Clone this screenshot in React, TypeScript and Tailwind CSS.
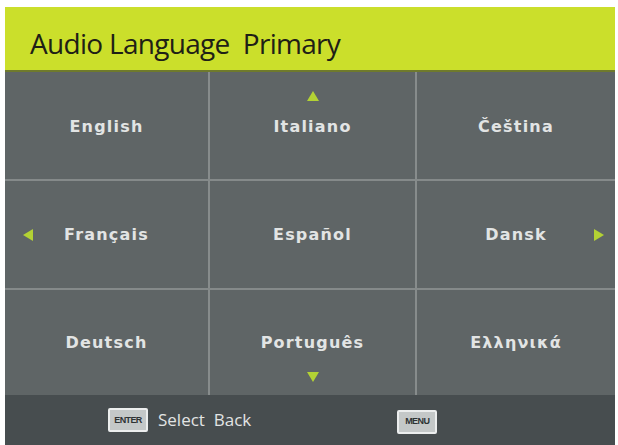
import React from "react";

type Arrow = "up" | "down" | "left" | "right" | null;

const CELLS: { label: string; arrow: Arrow }[] = [
  { label: "English", arrow: null },
  { label: "Italiano", arrow: "up" },
  { label: "Čeština", arrow: null },
  { label: "Français", arrow: "left" },
  { label: "Español", arrow: null },
  { label: "Dansk", arrow: "right" },
  { label: "Deutsch", arrow: null },
  { label: "Português", arrow: "down" },
  { label: "Ελληνικά", arrow: null },
];

function Tri({ dir }: { dir: Exclude<Arrow, null> }) {
  const pts: Record<string, string> = {
    up: "6,0 12,10 0,10",
    down: "0,0 12,0 6,10",
    left: "10,0 10,12 0,6",
    right: "0,0 10,6 0,12",
  };
  return (
    <svg width="12" height="12" viewBox="0 0 12 12">
      <polygon points={pts[dir]} fill="#b3d234" />
    </svg>
  );
}

function Key({ label }: { label: string }) {
  return (
    <span className="inline-flex h-[24px] w-[40px] items-center justify-center rounded-[2px] border-2 border-[#eceeee] bg-[#c4c8c8] text-[9px] font-bold leading-none tracking-[-0.6px] text-[#2e3334] [font-family:'Liberation_Sans_Narrow','Liberation_Sans',sans-serif]">
      {label}
    </span>
  );
}

export default function App() {
  return (
    <div className="h-[445px] w-[618px] overflow-hidden bg-white pl-[5px] pr-[3px] pt-[7px]">
      <div className="flex h-full flex-col">
        {/* Title bar */}
        <div className="flex h-[65px] shrink-0 items-center border-b-2 border-[#6f7a2c] bg-[#cbdf2b] pl-[25px] pt-[8px]">
          <h1 className="text-[28px] leading-none tracking-[-0.7px] text-[#1e2016] [font-family:'Open_Sans',sans-serif]">
            Audio Language&nbsp; Primary
          </h1>
        </div>

        {/* Language grid */}
        <div className="grid shrink-0 grid-cols-[203px_207px_200px] grid-rows-[107px_109px_107px] bg-[#5f6565]">
          {CELLS.map((c, i) => {
            const col = i % 3;
            const row = Math.floor(i / 3);
            return (
              <div
                key={c.label}
                className={
                  "relative flex items-center justify-center bg-[#5f6566] " +
                  (col > 0 ? "border-l-2 border-l-[#878c8c] " : "") +
                  (row > 0 ? "border-t-2 border-t-[#858a8a] " : "pt-[3px] ")
                }
              >
                {c.arrow === "up" && (
                  <div className="absolute left-1/2 top-[19px] -translate-x-1/2">
                    <Tri dir="up" />
                  </div>
                )}
                {c.arrow === "down" && (
                  <div className="absolute bottom-[11px] left-1/2 -translate-x-1/2">
                    <Tri dir="down" />
                  </div>
                )}
                {c.arrow === "left" && (
                  <div className="absolute left-[18px] top-1/2 -translate-y-1/2">
                    <Tri dir="left" />
                  </div>
                )}
                {c.arrow === "right" && (
                  <div className="absolute right-[9px] top-1/2 -translate-y-1/2">
                    <Tri dir="right" />
                  </div>
                )}
                <span className="text-[16px] font-bold tracking-[1.2px] text-[#e2e4e4] [font-family:'DejaVu_Sans',sans-serif]">
                  {c.label}
                </span>
              </div>
            );
          })}
        </div>

        {/* Footer */}
        <div className="flex flex-1 items-center bg-[#474d4f]">
          <div className="ml-[103px] flex items-center">
            <Key label="ENTER" />
            <span className="ml-[10px] text-[17px] text-[#e2e4e4] [font-family:'Open_Sans',sans-serif]">
              Select&nbsp; Back
            </span>
          </div>
          <div className="ml-[146px]">
            <Key label="MENU" />
          </div>
        </div>
      </div>
    </div>
  );
}
